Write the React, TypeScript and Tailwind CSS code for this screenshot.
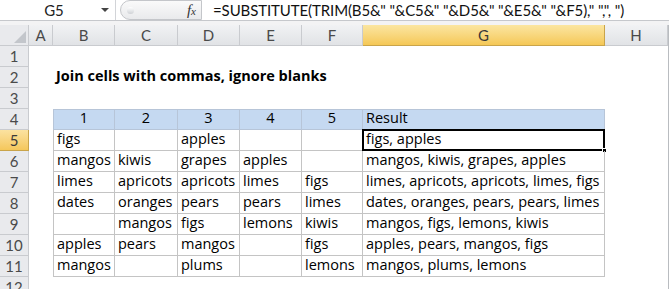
import React from "react";

const cols = ["A", "B", "C", "D", "E", "F", "G", "H"];

const data: string[][] = [
  ["figs", "", "apples", "", "", "figs, apples"],
  ["mangos", "kiwis", "grapes", "apples", "", "mangos, kiwis, grapes, apples"],
  ["limes", "apricots", "apricots", "limes", "figs", "limes, apricots, apricots, limes, figs"],
  ["dates", "oranges", "pears", "pears", "limes", "dates, oranges, pears, pears, limes"],
  ["", "mangos", "figs", "lemons", "kiwis", "mangos, figs, lemons, kiwis"],
  ["apples", "pears", "mangos", "", "figs", "apples, pears, mangos, figs"],
  ["mangos", "", "plums", "", "lemons", "mangos, plums, lemons"],
];

const cellFont = { fontFamily: "'Open Sans', 'Liberation Sans', sans-serif" };

function ColHeader({ label }: { label: string }) {
  const active = label === "G";
  return (
    <div
      className={
        "flex items-center justify-center border-r border-b text-[15px] " +
        (active
          ? "border-[#c9a44a] bg-gradient-to-b from-[#fbe6a0] to-[#f5c855] text-[#3a3a3a]"
          : "border-[#c9cbcf] bg-gradient-to-b from-[#f1f2f4] to-[#e1e3e6] text-[#4a4a4a]")
      }
    >
      {label}
    </div>
  );
}

function RowHeader({ n }: { n: number }) {
  const active = n === 5;
  return (
    <div
      className={
        "flex items-center justify-center border-r border-b text-[15px] " +
        (active
          ? "border-[#c9a44a] bg-gradient-to-b from-[#fbe2a0] to-[#f5c75a] text-[#3a3a3a]"
          : "border-[#c9cbcf] bg-[#e9eaed] text-[#4a4a4a]")
      }
    >
      {n}
    </div>
  );
}

export default function App() {
  const rows = Array.from({ length: 12 }, (_, i) => i + 1);

  return (
    <div
      className="h-[289px] w-[669px] overflow-hidden bg-white"
      style={{ fontFamily: "Lato, 'Liberation Sans', sans-serif" }}
    >
      {/* formula bar */}
      <div className="flex h-[21px] items-center border-b border-[#c6c8cc] bg-white">
        <div className="flex h-full w-[116px] items-center border-r border-[#d2d4d8]">
          <span className="flex-1 pl-[8px] text-center text-[15px] text-[#222]">G5</span>
          <svg width="10" height="6" viewBox="0 0 10 6" className="mr-[5px]">
            <path d="M1 1h8L5 5z" fill="#444" />
          </svg>
        </div>
        <div className="ml-[4px] flex h-[20px] w-[82px] items-center rounded-l-full rounded-r-[3px] border border-[#c4c6ca] bg-gradient-to-b from-[#fafafa] to-[#e9eaec]">
          <span className="ml-[6px] h-[7px] w-[7px] rounded-full bg-gradient-to-b from-white to-[#cfd2d6]" />
          <span
            className="ml-auto mr-[5px] text-[15px] italic text-[#333]"
            style={{ fontFamily: "'Liberation Serif', serif" }}
          >
            f<span className="text-[11px]">x</span>
          </span>
        </div>
        <div className="pl-[11px] text-[15px] tracking-[-0.1px] text-[#111]">
          =SUBSTITUTE(TRIM(B5&amp;" "&amp;C5&amp;" "&amp;D5&amp;" "&amp;E5&amp;" "&amp;F5)," ",", ")
        </div>
      </div>
      <div className="h-[4px] bg-[#f3f3f4]" />

      {/* sheet grid */}
      <div className="grid grid-cols-[29px_24px_62px_63px_62px_62px_61px_242px_63px_1fr] auto-rows-[21px]">
        <div className="relative border-r border-b border-[#c9cbcf] bg-[#e9eaed]">
          <svg width="12" height="12" viewBox="0 0 12 12" className="absolute right-[2px] bottom-[2px]">
            <path d="M12 0V12H0z" fill="#c3c6cb" />
          </svg>
        </div>
        {cols.map((c) => (
          <ColHeader key={c} label={c} />
        ))}
        <div className="border-l border-[#b9bcc0] bg-white" />

        {rows.map((r) => {
          const cells: React.ReactNode[] = [];
          cells.push(<RowHeader key={"h" + r} n={r} />);
          cells.push(<div key={"a" + r} />);

          if (r === 2) {
            cells.push(
              <div
                key="title"
                className="col-span-6 flex items-end whitespace-nowrap pb-[1px] pl-[3px] text-[14.5px] font-bold text-black"
                style={cellFont}
              >
                Join cells with commas, ignore blanks
              </div>
            );
          } else if (r === 4) {
            ["1", "2", "3", "4", "5"].forEach((h, i) =>
              cells.push(
                <div
                  key={"t" + i}
                  className={
                    "flex items-end justify-center border-t border-r border-b border-[#b7c5d8] bg-[#c5d9f1] text-[14.5px] text-black " +
                    (i === 0 ? "border-l" : "")
                  }
                  style={cellFont}
                >
                  {h}
                </div>
              )
            );
            cells.push(
              <div
                key="res"
                className="flex items-end border-t border-r border-b border-[#b7c5d8] bg-[#c5d9f1] pl-[3px] text-[14.5px] text-black"
                style={cellFont}
              >
                Result
              </div>
            );
          } else if (r >= 5 && r <= 11) {
            const row = data[r - 5];
            row.forEach((v, i) =>
              cells.push(
                <div
                  key={"d" + i}
                  className={
                    "relative flex items-end whitespace-nowrap border-r border-b border-[#c4c4c4] pl-[3px] text-[14.5px] text-black " +
                    (i === 0 ? "border-l" : "")
                  }
                  style={cellFont}
                >
                  {v}
                  {r === 5 && i === 5 && (
                    <div className="absolute -top-[1px] -left-[1px] -right-[1px] -bottom-[1px] border-2 border-black">
                      <div className="absolute -right-[4px] -bottom-[4px] h-[5px] w-[5px] border border-white bg-black" />
                    </div>
                  )}
                </div>
              )
            );
          } else {
            cells.push(<div key="e" className="col-span-6" />);
          }
          cells.push(<div key={"hh" + r} />);
          cells.push(<div key={"sb" + r} className="border-l border-[#b9bcc0]" />);
          return cells;
        })}
      </div>
    </div>
  );
}
